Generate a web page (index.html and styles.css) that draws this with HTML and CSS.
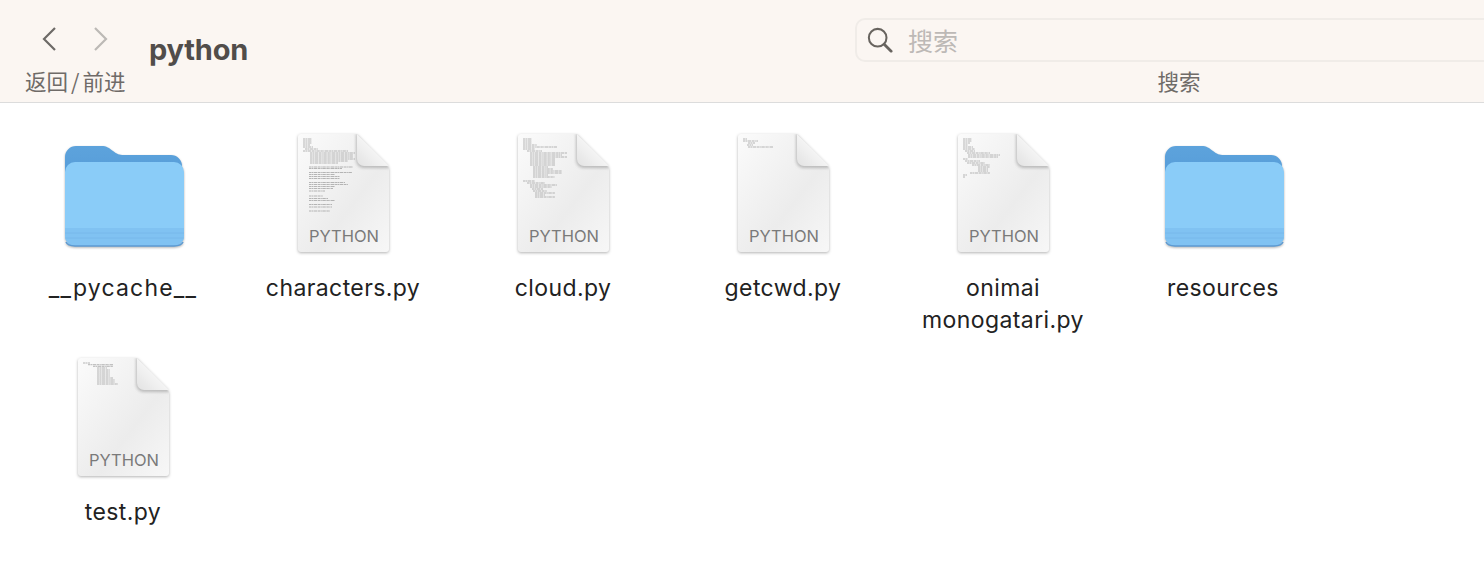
FILE: index.html
```html
<!DOCTYPE html>
<html lang="zh">
<head>
    <meta charset="UTF-8">
    <meta name="viewport" content="width=device-width, initial-scale=1.0">
    <title>python</title>
    <link rel="stylesheet" href="styles.css">
</head>
<body>
    <svg class="defs" width="0" height="0">
        <defs>
            <linearGradient id="docFill" x1="0" y1="0" x2="1" y2="1">
                <stop offset="0" stop-color="#fbfbfb"/>
                <stop offset="0.6" stop-color="#ececec"/>
                <stop offset="1" stop-color="#f7f7f7"/>
            </linearGradient>
            <linearGradient id="foldFill" x1="0" y1="1" x2="1" y2="0">
                <stop offset="0" stop-color="#e2e2e2"/>
                <stop offset="0.55" stop-color="#f6f6f6"/>
                <stop offset="1" stop-color="#ffffff"/>
            </linearGradient>
            <linearGradient id="folderBack" x1="0" y1="0" x2="0" y2="1">
                <stop offset="0" stop-color="#5da3dc"/>
                <stop offset="1" stop-color="#4a90d2"/>
            </linearGradient>
            <filter id="foldBlur" x="-30%" y="-30%" width="160%" height="160%">
                <feGaussianBlur stdDeviation="1.8"/>
            </filter>
            <clipPath id="docClip">
                <path d="M5 2H61L93 36V117a3 3 0 0 1-3 3H5a3 3 0 0 1-3-3V5a3 3 0 0 1 3-3Z"/>
            </clipPath>
            <symbol id="doc" viewBox="0 0 96 124">
                <path d="M5 2H61L93 36V117a3 3 0 0 1-3 3H5a3 3 0 0 1-3-3V5a3 3 0 0 1 3-3Z" fill="url(#docFill)"/>
                <g clip-path="url(#docClip)">
                    <path d="M60 2V28a8 8 0 0 0 8 8H93V2Z" fill="#8f8f8f" opacity="0.55" filter="url(#foldBlur)"/>
                </g>
                <path d="M61 2V27a7 7 0 0 0 7 7H93Z" fill="url(#foldFill)"/>
            </symbol>
            <symbol id="folder" viewBox="0 0 124 108">
                <path d="M2 14a11 11 0 0 1 11-11H38c6 0 8 2 12 5s6 4 11 4H108a11 11 0 0 1 11 11V90H2Z" fill="url(#folderBack)"/>
                <rect x="2" y="19" width="119" height="84" rx="10" fill="#8accf8"/>
                <path d="M2 85H121V93a10 10 0 0 1-10 10H12A10 10 0 0 1 2 93Z" fill="#80c2f2"/>
                <path d="M2 90H121M2 95H121" stroke="#72b3e6" stroke-width="1" opacity="0.6"/>
                <path d="M3 99a10 5 0 0 0 9 4H111a10 5 0 0 0 9-4" fill="none" stroke="#5c9bd3" stroke-width="1.5"/>
            </symbol>
        </defs>
    </svg>

    <header class="toolbar">
        <div class="nav-group">
            <div class="nav-arrows">
                <svg class="chevron" width="18" height="26" viewBox="0 0 18 26"><path d="M14 2L3 13L14 24" fill="none" stroke="#6d6a67" stroke-width="2.2"/></svg>
                <svg class="chevron" width="18" height="26" viewBox="0 0 18 26"><path d="M4 2L15 13L4 24" fill="none" stroke="#bcb9b6" stroke-width="2.2"/></svg>
            </div>
            <span class="toolbar-label">返回<span class="slash">/</span>前进</span>
        </div>
        <h1 class="window-title">python</h1>
        <div class="search-group">
            <div class="search-box">
                <svg width="26" height="26" viewBox="0 0 28 28"><circle cx="11.5" cy="11.5" r="9.5" fill="none" stroke="#68645f" stroke-width="2.2"/><path d="M18.5 18.5L26 26" stroke="#68645f" stroke-width="3" stroke-linecap="round"/></svg>
                <span class="search-placeholder">搜索</span>
            </div>
            <span class="toolbar-label">搜索</span>
        </div>
    </header>

    <main class="file-grid">
        <div class="file-item">
            <svg class="folder-icon"><use href="#folder"/></svg>
            <div class="file-name file-name-wide">__pycache__</div>
        </div>
        <div class="file-item">
            <div class="doc-icon">
                <svg class="doc-svg" viewBox="0 0 96 124">
                    <use href="#doc" width="96" height="124"/>
                    <path class="code" d="M7 7H16M7 9H16M7 11H16M7 13H14M7 15H17M9 17H22M7 19H52M14 21H59M14 23H57M14 25H57M14 27H59M14 29H52M14 31H42M13 35H57M13 36.500H46M13 40.500H56M13 42.500H39M13 44.500H44M13 46.500H44M13 50.500H49M13 52.500H52M13 54.500H39M13 56.500H37M13 59H29M13 64H27M13 66.500H32M13 68.500H39M13 72.500H36M13 75H36M13 79H34"/>
                </svg>
                <span class="doc-label">PYTHON</span>
            </div>
            <div class="file-name">characters.py</div>
        </div>
        <div class="file-item">
            <div class="doc-icon">
                <svg class="doc-svg" viewBox="0 0 96 124">
                    <use href="#doc" width="96" height="124"/>
                    <path class="code" d="M7 7H16M7 9H16M7 11H16M7 13H21M7 15H41M7 17H19M11 19H26M14 21H51M14 23H46M14 25H51M14 27H39M14 29H39M14 31H39M14 33H39M17 35H32M17 37H37M17 39H46M17 41H46M17 43H32M17 45H39M7 49H19M11 51H29M14 53H41M14 55H36M16 57H27M17 59H31M19 61H39M19 63H29M19 65H39"/>
                </svg>
                <span class="doc-label">PYTHON</span>
            </div>
            <div class="file-name">cloud.py</div>
        </div>
        <div class="file-item">
            <div class="doc-icon">
                <svg class="doc-svg" viewBox="0 0 96 124">
                    <use href="#doc" width="96" height="124"/>
                    <path class="code" d="M7 7H11M7 9H22M12 11H19M11 13H17M12 15H37"/>
                </svg>
                <span class="doc-label">PYTHON</span>
            </div>
            <div class="file-name">getcwd.py</div>
        </div>
        <div class="file-item">
            <div class="doc-icon">
                <svg class="doc-svg" viewBox="0 0 96 124">
                    <use href="#doc" width="96" height="124"/>
                    <path class="code" d="M7 7H16M7 9H16M7 11H14M7 13H12M7 15H17M7 17H19M9 19H19M11 21H34M12 23H44M12 25H42M7 27H12M9 29H24M11 31H29M16 33H34M22 35H34M22 37H32M22 39H32M14 41H34M7 43H11M7 45H9"/>
                </svg>
                <span class="doc-label">PYTHON</span>
            </div>
            <div class="file-name">onimai monogatari.py</div>
        </div>
        <div class="file-item">
            <svg class="folder-icon"><use href="#folder"/></svg>
            <div class="file-name">resources</div>
        </div>
        <div class="file-item">
            <div class="doc-icon">
                <svg class="doc-svg" viewBox="0 0 96 124">
                    <use href="#doc" width="96" height="124"/>
                    <path class="code" d="M7 7H14M12 8.700H37M17 10.300H37M21 12H31M21 14H34M21 16H34M21 18H34M21 20H34M21 22H37M21 24H39M21 26H39M21 28H42"/>
                </svg>
                <span class="doc-label">PYTHON</span>
            </div>
            <div class="file-name">test.py</div>
        </div>
    </main>
</body>
</html>
```

FILE: styles.css
```css
html, body {
    margin: 0;
    height: 100%;
}
body {
    font-family: Inter, "Noto Sans CJK SC", sans-serif;
    background-color: #ffffff;
    overflow: hidden;
}
.defs {
    display: block;
    height: 0;
}
.toolbar {
    display: flex;
    height: 103px;
    box-sizing: border-box;
    border-bottom: 1px solid #dcdcdc;
    background-color: #fbf6f2;
    padding-left: 25px;
    margin-right: -19px;
}
.nav-group {
    display: flex;
    flex-direction: column;
    align-items: flex-start;
    width: 124px;
    flex-shrink: 0;
}
.nav-arrows {
    display: flex;
    gap: 32px;
    margin: 26px 0 0 16px;
    height: 26px;
}
.chevron {
    display: block;
}
.toolbar-label {
    font-family: "Noto Sans CJK SC", sans-serif;
    font-size: 21.500px;
    line-height: 28px;
    color: #6f6b68;
    margin-top: 15px;
}
.slash {
    margin: 0 3px;
}
.window-title {
    flex: 1;
    margin: 32px 0 0;
    font-size: 29px;
    line-height: 36px;
    font-weight: 700;
    letter-spacing: -0.2px;
    color: #514d4a;
}
.search-group {
    display: flex;
    flex-direction: column;
    align-items: center;
    width: 648px;
    flex-shrink: 0;
    margin-left: -1px;
}
.search-group .toolbar-label {
    margin-top: 5px;
}
.search-box {
    display: flex;
    align-items: center;
    gap: 15px;
    box-sizing: border-box;
    width: 100%;
    height: 44px;
    margin-top: 18px;
    padding-left: 10px;
    border: 2px solid #f0ece8;
    border-radius: 10px;
}
.search-placeholder {
    font-family: "Noto Sans CJK SC", sans-serif;
    font-size: 25px;
    color: #bdb9b6;
}
.file-grid {
    display: grid;
    grid-template-columns: repeat(6, 220px);
    grid-auto-rows: 224px;
    padding-left: 13px;
}
.file-item {
    display: flex;
    flex-direction: column;
    align-items: center;
    padding-top: 29px;
}
.folder-icon {
    display: block;
    width: 124px;
    height: 108px;
    margin: 11px 0 11px 4px;
    filter: drop-shadow(0 1px 1px rgba(0, 0, 0, 0.3));
}
.doc-icon {
    position: relative;
    width: 96px;
    height: 124px;
    margin: 0 0 6px 2px;
}
.doc-svg {
    display: block;
    width: 96px;
    height: 124px;
    filter: drop-shadow(0 1px 1.5px rgba(0, 0, 0, 0.3));
}
.code {
    fill: none;
    stroke: #9a9a9a;
    stroke-width: 0.7;
    stroke-dasharray: 2.5 0.4 1.2 0.5 3.5 0.6;
}
.doc-label {
    position: absolute;
    left: 0;
    right: 0;
    bottom: 10px;
    text-align: center;
    font-size: 16.500px;
    line-height: 20px;
    color: #7a7a7a;
}
.file-name {
    width: 180px;
    margin-top: 10px;
    text-align: center;
    font-size: 23px;
    line-height: 32px;
    letter-spacing: 0.4px;
    color: #222222;
}
.file-name-wide {
    letter-spacing: 1.2px;
}
```
